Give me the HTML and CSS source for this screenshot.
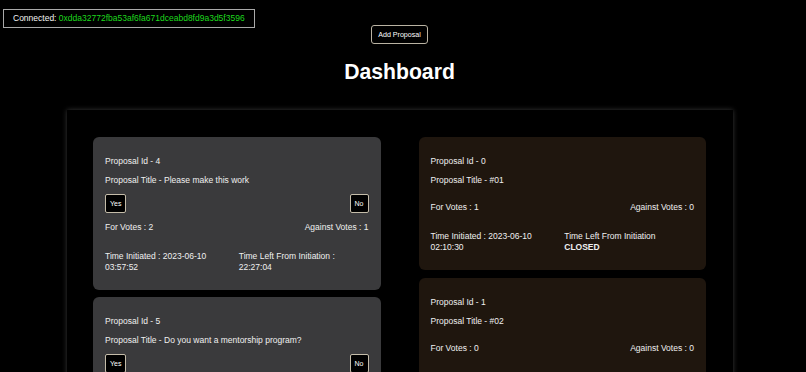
FILE: index.html
```html
<!DOCTYPE html>
<html>
<head>
  <title>Dashboard</title>
  <meta name="viewport" content="width=device-width, initial-scale=1.0">
  <link rel="stylesheet" href="styles.css">
</head>
<body>
  <div id="wallet">Connected: <span class="address">0xdda32772fba53af6fa671dceabd8fd9a3d5f3596</span></div>
  <div id="header">
    <button class="add-btn">Add Proposal</button>
    <h1>Dashboard</h1>
  </div>
  <div id="board">
    <div class="column">
      <div class="card open">
        <div class="line">Proposal Id - 4</div>
        <div class="line title">Proposal Title - Please make this work</div>
        <div class="actions">
          <button class="vote-btn">Yes</button>
          <button class="vote-btn">No</button>
        </div>
        <div class="line votes">
          <span>For Votes : 2</span>
          <span>Against Votes : 1</span>
        </div>
        <div class="times">
          <div>Time Initiated : 2023-06-10 03:57:52</div>
          <div>Time Left From Initiation : 22:27:04</div>
        </div>
      </div>
      <div class="card open">
        <div class="line">Proposal Id - 5</div>
        <div class="line title">Proposal Title - Do you want a mentorship program?</div>
        <div class="actions">
          <button class="vote-btn">Yes</button>
          <button class="vote-btn">No</button>
        </div>
        <div class="line votes">
          <span>For Votes : 0</span>
          <span>Against Votes : 0</span>
        </div>
        <div class="times">
          <div>Time Initiated : 2023-06-10 04:02:11</div>
          <div>Time Left From Initiation : 22:31:23</div>
        </div>
      </div>
    </div>
    <div class="column">
      <div class="card closed">
        <div class="line">Proposal Id - 0</div>
        <div class="line title">Proposal Title - #01</div>
        <div class="line votes">
          <span>For Votes : 1</span>
          <span>Against Votes : 0</span>
        </div>
        <div class="times">
          <div>Time Initiated : 2023-06-10 02:10:30</div>
          <div>Time Left From Initiation<br><strong>CLOSED</strong></div>
        </div>
      </div>
      <div class="card closed">
        <div class="line">Proposal Id - 1</div>
        <div class="line title">Proposal Title - #02</div>
        <div class="line votes">
          <span>For Votes : 0</span>
          <span>Against Votes : 0</span>
        </div>
        <div class="times">
          <div>Time Initiated : 2023-06-10 02:11:05</div>
          <div>Time Left From Initiation<br><strong>CLOSED</strong></div>
        </div>
      </div>
    </div>
  </div>
</body>
</html>
```

FILE: styles.css
```css
body {
  font-family: "Liberation Sans", Arial, sans-serif;
  font-size: 8.5px;
  margin: 0;
  padding-right: 7px;
  background-color: #000;
  color: #f0f0f0;
}
#wallet {
  position: absolute;
  top: 9px;
  left: 3px;
  border: 1px solid #a9a9a9;
  padding: 3px 9px;
  line-height: 11px;
  color: #f4f4f4;
}
#wallet .address {
  color: #1ed81e;
}
#header {
  display: flex;
  flex-direction: column;
  align-items: center;
  padding-top: 25px;
}
.add-btn {
  font-family: inherit;
  font-size: 7.1px;
  height: 19px;
  padding: 0 6px;
  background-color: #000;
  color: #fff;
  border: 1px solid #bab3a3;
  border-radius: 3px;
}
#header h1 {
  margin: 15px 0 0;
  font-size: 21.2px;
  line-height: 25px;
  font-weight: bold;
  color: #fff;
}
#board {
  margin: 26px 66px 0 67px;
  padding: 27px 27px 40px 26px;
  display: grid;
  grid-template-columns: 1fr 1fr;
  column-gap: 38px;
  align-items: start;
  box-shadow: 0 0 5px rgba(255, 255, 255, 0.22);
  min-height: 300px;
}
.column {
  display: flex;
  flex-direction: column;
  gap: 7px;
}
.column:last-child {
  gap: 8px;
}
.card {
  border-radius: 6px;
  padding: 19px 12px 18px;
}
.card.open {
  background-color: #3a3a3c;
}
.card.closed {
  background-color: #1f160e;
}
.line {
  line-height: 10px;
}
.title {
  margin-top: 9px;
}
.actions {
  display: flex;
  justify-content: space-between;
  margin-top: 9px;
}
.vote-btn {
  font-family: inherit;
  font-size: 7px;
  height: 19px;
  padding: 0 4px;
  background-color: #000;
  color: #fff;
  border: 1px solid #c4bca9;
  border-radius: 2px;
}
.votes {
  display: flex;
  justify-content: space-between;
  margin-top: 17px;
}
.actions + .votes {
  margin-top: 9px;
}
.times {
  display: grid;
  grid-template-columns: 1fr 1fr;
  column-gap: 4px;
  margin-top: 19px;
  line-height: 10.5px;
}
.times strong {
  font-weight: bold;
}
```
